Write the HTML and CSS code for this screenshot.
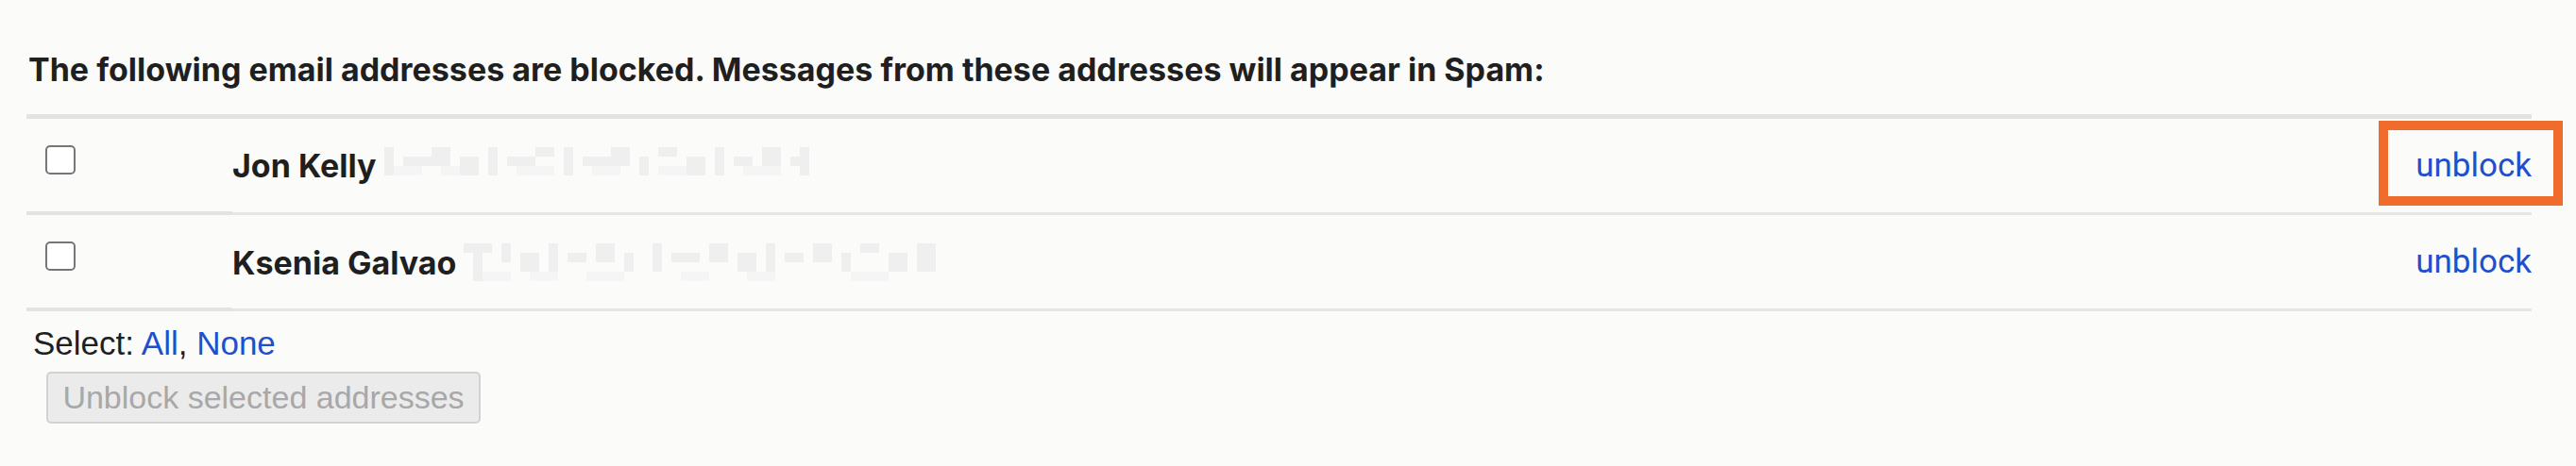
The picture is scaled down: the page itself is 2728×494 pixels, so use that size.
FILE: index.html
```html
<!DOCTYPE html>
<html>
<head>
<meta charset="utf-8">
<link rel="stylesheet" href="styles.css">
</head>
<body>
<div class="wrap">
  <h1 class="heading">The following email addresses are blocked. Messages from these addresses will appear in Spam:</h1>
  <table class="list">
    <tr>
      <td class="c-check"><span class="box"></span></td>
      <td class="c-name"><span class="name">Jon Kelly</span>
        <svg class="mask mask1" width="460" height="40" viewBox="0 0 46 4">
          <g fill="#efefef">
            <rect x="0" y="0" width="1" height="3"/><rect x="2" y="1" width="3" height="1"/><rect x="5" y="0" width="2" height="2"/>
            <rect x="8" y="1" width="2" height="2"/><rect x="11" y="0" width="1" height="3"/><rect x="13" y="1" width="3" height="1"/>
            <rect x="16" y="0" width="2" height="1"/><rect x="19" y="0" width="1" height="3"/><rect x="21" y="1" width="3" height="1"/>
            <rect x="24" y="0" width="2" height="2"/><rect x="27" y="1" width="1" height="2"/><rect x="29" y="0" width="2" height="1"/>
            <rect x="32" y="1" width="2" height="2"/><rect x="35" y="0" width="1" height="3"/><rect x="37" y="1" width="2" height="1"/>
            <rect x="40" y="0" width="2" height="2"/><rect x="43" y="1" width="2" height="1"/><rect x="44" y="0" width="1" height="3"/>
          </g>
          <g fill="#f5f5f5">
            <rect x="1" y="2" width="3" height="1"/><rect x="6" y="2" width="2" height="1"/><rect x="14" y="2" width="4" height="1"/>
            <rect x="22" y="2" width="3" height="1"/><rect x="29" y="2" width="3" height="1"/><rect x="38" y="2" width="4" height="1"/>
          </g>
        </svg>
      </td>
      <td class="c-action"><a class="unblock hl" href="#">unblock</a></td>
    </tr>
    <tr>
      <td class="c-check"><span class="box"></span></td>
      <td class="c-name"><span class="name">Ksenia Galvao</span>
        <svg class="mask mask2" width="510" height="44" viewBox="0 0 51 4">
          <g fill="#efefef">
            <rect x="0" y="0" width="3" height="1"/><rect x="1" y="1" width="1" height="3"/><rect x="4" y="0" width="1" height="2"/>
            <rect x="6" y="1" width="2" height="2"/><rect x="9" y="0" width="1" height="3"/><rect x="11" y="1" width="2" height="1"/>
            <rect x="14" y="0" width="2" height="2"/><rect x="17" y="1" width="1" height="2"/><rect x="20" y="0" width="1" height="3"/>
            <rect x="22" y="1" width="3" height="1"/><rect x="26" y="0" width="2" height="2"/><rect x="29" y="1" width="2" height="2"/>
            <rect x="32" y="0" width="1" height="3"/><rect x="34" y="1" width="2" height="1"/><rect x="37" y="0" width="2" height="2"/>
            <rect x="40" y="1" width="1" height="2"/><rect x="42" y="0" width="2" height="1"/><rect x="45" y="1" width="2" height="2"/>
            <rect x="48" y="0" width="2" height="3"/>
          </g>
          <g fill="#f5f5f5">
            <rect x="2" y="3" width="3" height="1"/><rect x="7" y="3" width="3" height="1"/><rect x="13" y="3" width="4" height="1"/>
            <rect x="23" y="3" width="3" height="1"/><rect x="30" y="3" width="3" height="1"/><rect x="41" y="3" width="4" height="1"/>
          </g>
        </svg>
      </td>
      <td class="c-action"><a class="unblock" href="#">unblock</a></td>
    </tr>
  </table>
  <div class="select">Select: <a href="#">All</a>, <a href="#">None</a></div>
  <button class="btn" disabled>Unblock selected addresses</button>
</div>
</body>
</html>
```
FILE: styles.css
```css
html, body {
  margin: 0;
  padding: 0;
  background: #fbfbfa;
}
.wrap {
  padding: 0 47px 0 28px;
}
.heading {
  margin: 0;
  padding: 52px 0 25px 2px;
  font-family: Inter, "Noto Sans", sans-serif;
  font-weight: 700;
  font-size: 34px;
  line-height: 44px;
  color: #1f1f1f;
  white-space: nowrap;
}
.list {
  width: 100%;
  border-collapse: separate;
  border-spacing: 0;
  border-top: 5px solid #e3e3e3;
}
.list td {
  height: 98px;
  padding: 0;
  border-bottom: 3px solid #e6e6e6;
  vertical-align: middle;
}
.list td.c-check {
  width: 218px;
  border-bottom: 4px solid #e3e3e3;
  vertical-align: top;
}
.box {
  display: block;
  width: 28px;
  height: 27px;
  margin: 28px 0 0 20px;
  border: 2.5px solid #767676;
  border-radius: 5px;
  background: #fff;
}
.c-name {
  white-space: nowrap;
}
.name {
  font-family: Inter, "Noto Sans", sans-serif;
  font-weight: 700;
  font-size: 34px;
  color: #1f1f1f;
  vertical-align: middle;
}
.mask {
  vertical-align: middle;
  margin-left: 4px;
}
.c-action {
  text-align: right;
}
.unblock {
  position: relative;
  font-family: Roboto, "Liberation Sans", sans-serif;
  font-size: 35px;
  color: #1f4fcc;
  text-decoration: none;
}
.unblock.hl::after {
  content: "";
  position: absolute;
  left: -39px;
  right: -33px;
  top: -27px;
  bottom: -22px;
  border: 10px solid #ef6c2c;
}
.select {
  margin: 14px 0 0 7px;
  font-family: "Liberation Sans", Arial, sans-serif;
  font-size: 35px;
  line-height: 40px;
  color: #1f1f1f;
}
.select a {
  color: #1f4fcc;
  text-decoration: none;
}
.btn {
  display: block;
  margin: 10px 0 0 21px;
  width: 460px;
  height: 55px;
  padding: 0;
  border: 2px solid #d2d2d2;
  border-radius: 5px;
  background: #ebebeb;
  font-family: "Liberation Sans", Arial, sans-serif;
  font-size: 34px;
  color: #a8a8a8;
}
```
